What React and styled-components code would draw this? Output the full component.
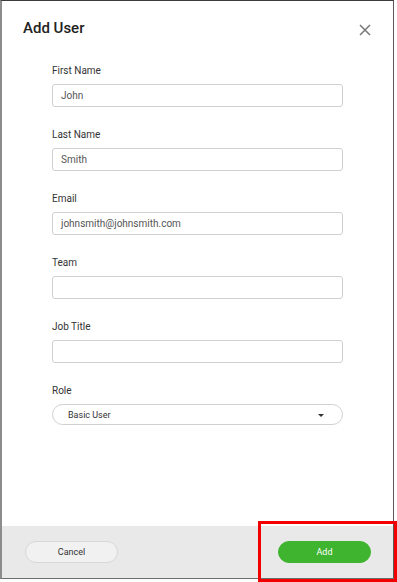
import React from 'react';
import styled, { createGlobalStyle } from 'styled-components';

const GlobalStyle = createGlobalStyle`
    html, body {
        margin: 0;
        padding: 0;
        background: #ffffff;
        font-family: Roboto, 'Liberation Sans', Arial, sans-serif;
    }
`;

const Page = styled.div`
    position: relative;
    width: 397px;
    height: 582px;
    overflow: hidden;
`;

const Modal = styled.div`
    box-sizing: border-box;
    width: 394px;
    height: 579px;
    display: flex;
    flex-direction: column;
    background: #fff;
    border-left: 2px solid #8c8c8c;
    border-top: 1px solid #3a3a3a;
    border-right: 1px solid #5a5a5a;
    border-bottom: 1px solid #6e6e6e;
`;

const Header = styled.div`
    display: flex;
    justify-content: space-between;
    align-items: flex-start;
    padding: 17px 22px 0 21px;
    height: 44px;
    box-sizing: border-box;
`;

const Title = styled.h2`
    margin: 0;
    font-size: 15px;
    font-weight: 500;
    color: #222;
    line-height: 20px;
`;

const Close = styled.button`
    border: 0;
    background: none;
    padding: 0;
    margin-top: 6px;
    width: 12px;
    height: 12px;
    cursor: pointer;
    display: flex;
`;

const Body = styled.div`
    flex: 1;
    display: flex;
    flex-direction: column;
    gap: 22px;
    padding: 20px 50px 0 50px;
`;

const Field = styled.div`
    display: flex;
    flex-direction: column;
    gap: 7px;
`;

const Label = styled.label`
    font-size: 10px;
    color: #333;
    line-height: 12px;
`;

const Input = styled.div`
    box-sizing: border-box;
    height: ${p => (p.$pill ? '21px' : '23px')};
    border: 1px solid #d0d0d0;
    border-radius: ${p => (p.$pill ? '11px' : '3px')};
    padding: 0 ${p => (p.$pill ? '18px' : '8px')} 0 ${p => (p.$pill ? '15px' : '8px')};
    display: flex;
    align-items: center;
    justify-content: space-between;
    font-size: ${p => (p.$pill ? '9px' : '10px')};
    color: ${p => (p.$pill ? '#333' : '#555')};
    background: #fff;
`;

const Caret = styled.span`
    width: 0;
    height: 0;
    border-left: 3px solid transparent;
    border-right: 3px solid transparent;
    border-top: 3px solid #333;
    margin-top: 2px;
`;

const Footer = styled.div`
    height: 52px;
    background: #e9e9e9;
    display: flex;
    justify-content: space-between;
    align-items: center;
    padding: 0 22px 0 23px;
`;

const Button = styled.button`
    box-sizing: border-box;
    width: 93px;
    height: 22px;
    border-radius: 11px;
    font-family: inherit;
    font-size: 9px;
    border: 1px solid ${p => (p.$primary ? '#3fb42f' : '#d8d8d8')};
    background: ${p => (p.$primary ? '#3fb42f' : '#f1f1f1')};
    color: ${p => (p.$primary ? '#fff' : '#333')};
`;

const Highlight = styled.div`
    position: absolute;
    left: 258px;
    top: 521px;
    width: 139px;
    height: 61px;
    box-sizing: border-box;
    border: 3px solid #f20000;
    pointer-events: none;
`;

const fields = [
    { label: 'First Name', value: 'John' },
    { label: 'Last Name', value: 'Smith' },
    { label: 'Email', value: 'johnsmith@johnsmith.com' },
    { label: 'Team', value: '' },
    { label: 'Job Title', value: '' },
];

const App = () => (
    <>
        <GlobalStyle />
        <Page>
            <Modal>
                <Header>
                    <Title>Add User</Title>
                    <Close aria-label="Close">
                        <svg width="12" height="12" viewBox="0 0 12 12">
                            <path d="M1 1L11 11M11 1L1 11" stroke="#777" strokeWidth="1.5" />
                        </svg>
                    </Close>
                </Header>
                <Body>
                    {fields.map(f => (
                        <Field key={f.label}>
                            <Label>{f.label}</Label>
                            <Input>{f.value}</Input>
                        </Field>
                    ))}
                    <Field>
                        <Label>Role</Label>
                        <Input $pill>
                            Basic User
                            <Caret />
                        </Input>
                    </Field>
                </Body>
                <Footer>
                    <Button>Cancel</Button>
                    <Button $primary>Add</Button>
                </Footer>
            </Modal>
            <Highlight />
        </Page>
    </>
);

export default App;
